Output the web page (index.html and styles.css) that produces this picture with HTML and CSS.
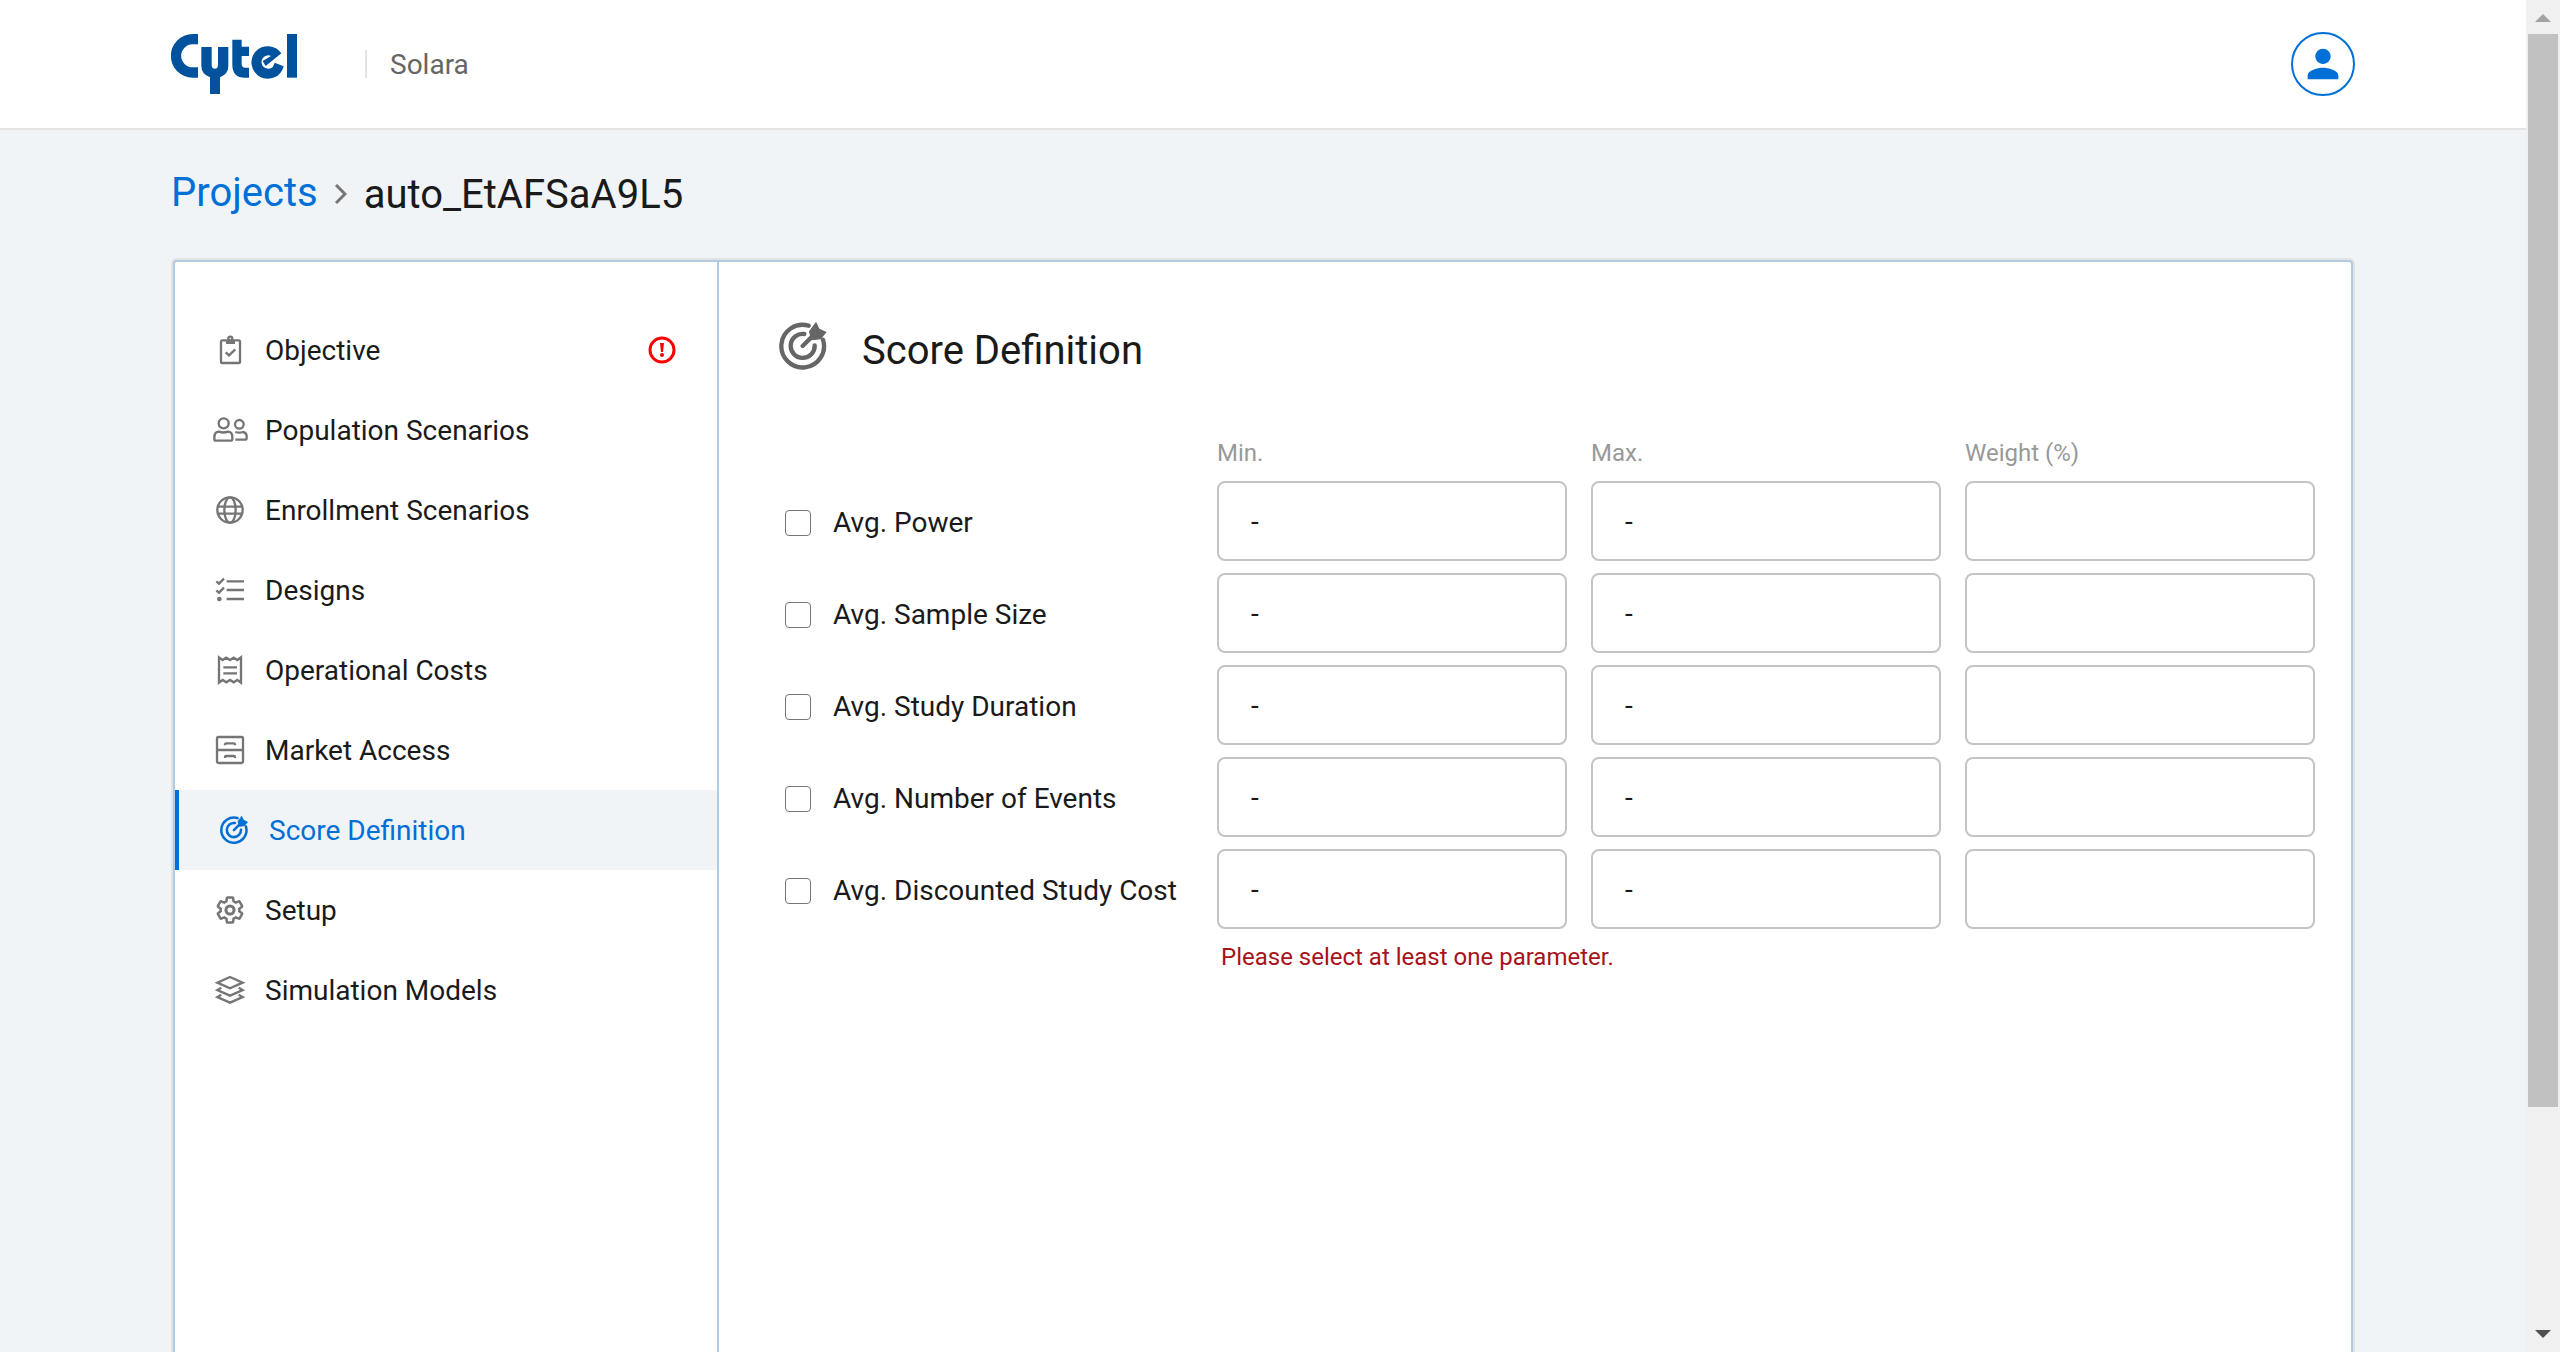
FILE: index.html
```html
<!DOCTYPE html>
<html lang="en">
<head>
<meta charset="utf-8">
<title>Solara - Score Definition</title>
<link rel="stylesheet" href="styles.css">
</head>
<body>
<div class="window">
  <div class="page">
    <header class="topbar">
      <a class="brand" href="#" aria-label="Cytel">
        <svg class="logo" viewBox="0 0 378 180" aria-hidden="true">
          <path d="M81 0H65A65 65 0 0 0 65 131H81V100H65A34 34 0 0 1 65 31H81Z"/>
          <path d="M91 39H122V92Q122 104 132 104Q141 104 141 92V39H172V95Q172 120 147 130V180H117V130Q91 120 91 95Z"/>
          <path d="M184 17H212V38H234V66H212V90Q212 101 223 101H234V131H222Q184 131 184 92Z"/>
          <path d="M338 97A49 49 0 1 1 331 58L284 96L275 81L300 66A20 20 0 1 0 306 98L311 86Z"/>
          <path d="M348 0H378V131H348Z"/>
        </svg>
      </a>
      <span class="product">Solara</span>
      <button class="avatar" type="button" aria-label="Account">
        <svg class="avatar-icon" viewBox="0 0 24 24" aria-hidden="true"><path d="M12 12c2.21 0 4-1.79 4-4s-1.79-4-4-4-4 1.790-4 4 1.790 4 4 4zm0 2c-2.670 0-8 1.340-8 4v2h16v-2c0-2.660-5.330-4-8-4z"/></svg>
      </button>
    </header>

    <nav class="crumbs" aria-label="Breadcrumb">
      <a class="crumb-link" href="#">Projects</a>
      <svg class="crumb-sep" viewBox="0 0 12 20" aria-hidden="true"><path d="M1 1l9 9-9 9"/></svg>
      <span class="crumb-current">auto_EtAFSaA9L5</span>
    </nav>

    <div class="card">
      <nav class="sidebar" aria-label="Project sections">
        <a class="item" href="#">
          <svg class="icon" viewBox="0 0 108 108" aria-hidden="true"><rect x="27" y="25" width="57" height="68" rx="4"/><rect class="solid" x="42" y="24" width="27" height="12"/><circle cx="55" cy="20" r="6"/><path d="M41 61l10 9 19-18"/></svg>
          <span class="item-label">Objective</span>
          <svg class="alert" viewBox="0 0 28 28" role="img" aria-label="Needs attention"><circle cx="14" cy="14" r="12"/><path d="M12 7h4l-1 9h-2z"/><circle class="dot" cx="14" cy="19" r="2"/></svg>
        </a>
        <a class="item" href="#">
          <svg class="icon" viewBox="0 0 108 108" aria-hidden="true"><circle cx="35" cy="34" r="15"/><path d="M7 80V77Q7 59 21 59Q34 64 48 59Q61 59 61 77V81Q61 86 56 86H12Q7 86 7 80Z"/><circle cx="82" cy="37" r="13"/><path d="M70 60Q82 64 93 60Q104 62 104 74V77Q104 83 98 83H70"/></svg>
          <span class="item-label">Population Scenarios</span>
        </a>
        <a class="item" href="#">
          <svg class="icon" viewBox="0 0 108 108" aria-hidden="true"><circle cx="54" cy="54" r="38"/><ellipse cx="54" cy="54" rx="17" ry="38"/><path d="M16 44H92M16 65H92"/></svg>
          <span class="item-label">Enrollment Scenarios</span>
        </a>
        <a class="item" href="#">
          <svg class="icon" viewBox="0 0 108 108" aria-hidden="true"><path d="M44 28H96M44 54H96M44 81H96M13 28l8 7 15-15M13 55l8 7 15-15"/><circle class="solid" cx="22" cy="81" r="7"/></svg>
          <span class="item-label">Designs</span>
        </a>
        <a class="item" href="#">
          <svg class="icon" viewBox="0 0 108 108" aria-hidden="true"><path d="M21 16l11 8 11-7 11 7 11-7 11 7 11-8V92l-11-8-11 7-11-7-11 7-11-7-11 8ZM34 46H75M34 64H75"/></svg>
          <span class="item-label">Operational Costs</span>
        </a>
        <a class="item" href="#">
          <svg class="icon" viewBox="0 0 108 108" aria-hidden="true"><rect x="15" y="15" width="78" height="78" rx="5"/><path d="M15 54H93M39 40V37Q39 34 43 34H65Q69 34 69 37V40M39 78V75Q39 72 43 72H65Q69 72 69 75V78"/></svg>
          <span class="item-label">Market Access</span>
        </a>
        <a class="item item-active" href="#" aria-current="page">
          <svg class="icon" viewBox="-20 -20 183 183" aria-hidden="true"><g class="target"><path d="M132 53A64 64 0 1 1 89 11M107 70A36 36 0 1 1 76 36M71 72L100 43"/><path class="dart" d="M111 3L119 21L140 31L124 50L98 53L92 29Z"/></g></svg>
          <span class="item-label">Score Definition</span>
        </a>
        <a class="item" href="#">
          <svg class="icon" viewBox="0 0 24 24" aria-hidden="true"><g class="gear"><path transform="translate(2 2) scale(.833)" d="M19.430 12.980c.04-.32.07-.64.07-.98 0-.34-.03-.66-.07-.98l2.110-1.650c.19-.15.24-.42.12-.64l-2-3.460c-.09-.16-.26-.25-.44-.25-.06 0-.12.01-.17.03l-2.490 1c-.52-.4-1.080-.73-1.690-.98l-.38-2.650C14.460 2.180 14.250 2 14 2h-4c-.25 0-.46.18-.49.42l-.38 2.650c-.61.25-1.170.59-1.690.98l-2.490-1c-.06-.02-.12-.03-.18-.03-.17 0-.34.09-.43.25l-2 3.460c-.13.22-.07.49.12.64l2.110 1.650c-.04.32-.07.65-.07.98 0 .33.03.66.07.98l-2.110 1.650c-.19.15-.24.42-.12.64l2 3.460c.09.16.26.25.44.25.06 0 .12-.01.17-.03l2.490-1c.52.4 1.080.73 1.690.98l.38 2.650c.03.24.24.42.49.42h4c.25 0 .46-.18.49-.42l.38-2.650c.61-.25 1.170-.59 1.690-.98l2.490 1c.06.02.12.03.18.03.17 0 .34-.09.43-.25l2-3.460c.12-.22.07-.49-.12-.64z"/><circle cx="12" cy="12" r="2.700"/></g></svg>
          <span class="item-label">Setup</span>
        </a>
        <a class="item" href="#">
          <svg class="icon" viewBox="0 0 108 108" aria-hidden="true"><path d="M54 15L92 32L54 49L16 32ZM28 47L16 54L54 71L92 54L80 47M28 68L16 75L54 92L92 75L80 68"/></svg>
          <span class="item-label">Simulation Models</span>
        </a>
      </nav>

      <main class="panel">
        <div class="panel-head">
          <svg class="panel-icon" viewBox="0 0 144 144" aria-hidden="true"><g class="target"><path d="M132 53A64 64 0 1 1 89 11M107 70A36 36 0 1 1 76 36M71 72L100 43"/><path class="dart" d="M111 3L119 21L140 31L124 50L98 53L92 29Z"/></g></svg>
          <h1 class="title">Score Definition</h1>
        </div>
        <form class="scores">
          <span></span>
          <span class="col-name" id="min">Min.</span>
          <span class="col-name" id="max">Max.</span>
          <span class="col-name" id="weight">Weight (%)</span>

          <label class="param" id="power"><input class="tick" type="checkbox">Avg. Power</label>
          <input class="field" type="text" value="-" aria-labelledby="power min">
          <input class="field" type="text" value="-" aria-labelledby="power max">
          <input class="field" type="text" aria-labelledby="power weight">

          <label class="param" id="sample"><input class="tick" type="checkbox">Avg. Sample Size</label>
          <input class="field" type="text" value="-" aria-labelledby="sample min">
          <input class="field" type="text" value="-" aria-labelledby="sample max">
          <input class="field" type="text" aria-labelledby="sample weight">

          <label class="param" id="duration"><input class="tick" type="checkbox">Avg. Study Duration</label>
          <input class="field" type="text" value="-" aria-labelledby="duration min">
          <input class="field" type="text" value="-" aria-labelledby="duration max">
          <input class="field" type="text" aria-labelledby="duration weight">

          <label class="param" id="events"><input class="tick" type="checkbox">Avg. Number of Events</label>
          <input class="field" type="text" value="-" aria-labelledby="events min">
          <input class="field" type="text" value="-" aria-labelledby="events max">
          <input class="field" type="text" aria-labelledby="events weight">

          <label class="param" id="cost"><input class="tick" type="checkbox">Avg. Discounted Study Cost</label>
          <input class="field" type="text" value="-" aria-labelledby="cost min">
          <input class="field" type="text" value="-" aria-labelledby="cost max">
          <input class="field" type="text" aria-labelledby="cost weight">

          <p class="error" role="alert">Please select at least one parameter.</p>
        </form>
      </main>
    </div>
  </div>
  <div class="scrollbar" aria-hidden="true">
    <svg class="arrow arrow-up" viewBox="0 0 16 8"><path d="M0 8L8 0L16 8Z"/></svg>
    <div class="track"><div class="thumb"></div></div>
    <svg class="arrow arrow-down" viewBox="0 0 16 8"><path d="M0 0L8 8L16 0Z"/></svg>
  </div>
</div>
</body>
</html>
```
FILE: styles.css
```css
* {
  box-sizing: border-box;
}

body {
  margin: 0;
  font-family: Roboto, sans-serif;
  font-size: 28px;
  line-height: 36px;
  color: #1a1a1a;
  background: #f0f4f7;
}

a {
  color: inherit;
  text-decoration: none;
}

.window {
  display: flex;
  height: 100vh;
  overflow: hidden;
}

.page {
  display: flex;
  flex: 1;
  flex-direction: column;
  min-width: 0;
}

/* Top bar */
.topbar {
  display: flex;
  align-items: center;
  padding: 32px 171px;
  background: #fff;
  border-bottom: 2px solid #e3e3e3;
}

.brand {
  display: flex;
}

.logo {
  width: 126px;
  height: 60px;
  fill: #00529c;
}

.product {
  margin-left: 68px;
  padding: 2px 0 0 23px;
  border-left: 2px solid #e3e3e3;
  line-height: 26px;
  color: #666;
}

.avatar {
  display: flex;
  align-items: center;
  justify-content: center;
  width: 64px;
  height: 64px;
  margin-left: auto;
  padding: 0;
  background: #fff;
  border: 2px solid #006fd6;
  border-radius: 50%;
}

.avatar-icon {
  width: 46px;
  height: 46px;
  fill: #006fd6;
}

/* Breadcrumb */
.crumbs {
  display: flex;
  align-items: center;
  gap: 17px;
  padding: 39px 171px;
  font-size: 40px;
  line-height: 48px;
}

.crumb-link {
  padding-bottom: 2px;
  color: #006fd6;
}

.crumb-sep {
  width: 12px;
  height: 20px;
  fill: none;
  stroke: #757575;
  stroke-width: 3;
}

.crumb-current {
  padding-top: 2px;
}

/* Card */
.card {
  display: flex;
  flex: none;
  min-height: 100vh;
  margin: 2px 173px 0;
  background: #fff;
  border: 2px solid #b0cbe2;
  border-radius: 4px;
  box-shadow: 0 0 0 2px #e3e3e3;
}

.sidebar {
  flex: none;
  width: 544px;
  padding-top: 48px;
  border-right: 2px solid #b0cbe2;
}

.item {
  display: flex;
  align-items: center;
  gap: 17px;
  height: 80px;
  padding: 0 41px 0 37px;
}

.item-active {
  color: #006fd6;
  background: #f0f4f7;
  border-left: 4px solid #006fd6;
}

.item-label {
  flex: 1;
  padding-top: 2px;
}

.icon {
  width: 36px;
  height: 36px;
  overflow: visible;
  fill: none;
  stroke: #757575;
  stroke-width: 7;
}

.solid {
  fill: #757575;
  stroke: none;
}

.gear {
  stroke-width: 2;
}

.target {
  fill: none;
  stroke: currentColor;
  stroke-width: 13;
  stroke-linecap: round;
  stroke-linejoin: round;
}

.target .dart {
  fill: currentColor;
  stroke-width: 4;
}

.alert {
  width: 28px;
  height: 28px;
  fill: none;
  stroke: #f00;
  stroke-width: 3;
}

.alert path,
.alert .dot {
  fill: #f00;
  stroke: none;
}

/* Score form */
.panel {
  flex: 1;
  min-width: 0;
  padding: 60px 36px 48px 60px;
}

.panel-head {
  display: flex;
  align-items: flex-start;
  gap: 35px;
}

.panel-icon {
  width: 48px;
  height: 48px;
  color: #666;
}

.title {
  margin: 0;
  padding-top: 5px;
  font-size: 40px;
  font-weight: 400;
  line-height: 48px;
}

.scores {
  display: grid;
  grid-template-columns: 414px repeat(3, minmax(0, 1fr));
  gap: 12px 24px;
  margin-top: 62px;
}

.col-name {
  font-size: 24px;
  line-height: 32px;
  color: #999;
}

.param {
  display: flex;
  align-items: center;
  gap: 22px;
  padding: 3px 0 0 6px;
  white-space: nowrap;
}

.tick {
  flex: none;
  width: 26px;
  height: 26px;
  margin: 0;
  appearance: none;
  background: #fff;
  border: 1px solid #767676;
  border-radius: 4px;
}

.field {
  width: 100%;
  height: 80px;
  padding: 0 32px;
  font: inherit;
  color: inherit;
  background: #fff;
  border: 2px solid #c4c4c4;
  border-radius: 8px;
}

.error {
  grid-column: 2 / -1;
  margin: 0;
  padding-left: 4px;
  font-size: 24px;
  line-height: 32px;
  color: #a6131b;
}

/* Scrollbar */
.scrollbar {
  display: flex;
  flex: none;
  flex-direction: column;
  align-items: center;
  gap: 12px;
  width: 34px;
  padding: 14px 2px;
  background: #f0f0f0;
}

.arrow {
  flex: none;
  width: 16px;
  height: 8px;
}

.arrow-up {
  fill: #a3a3a3;
}

.arrow-down {
  fill: #505050;
}

.track {
  flex: 1;
  align-self: stretch;
}

.thumb {
  height: 83.6%;
  background: #c1c1c1;
}
```
